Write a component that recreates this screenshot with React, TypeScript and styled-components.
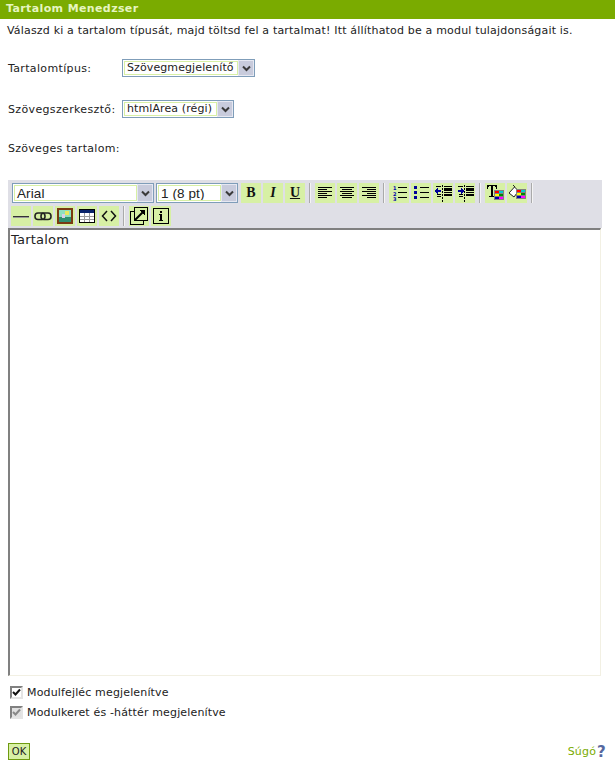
import React from "react";
import styled, { createGlobalStyle } from "styled-components";

const Global = createGlobalStyle`
  html, body { margin: 0; padding: 0; background: #fff; }
  body { font-family: "DejaVu Sans", Verdana, sans-serif; font-size: 11px; color: #222; }
`;

const Page = styled.div`
  width: 615px;
  height: 767px;
  display: flex;
  flex-direction: column;
  overflow: hidden;
`;
const Header = styled.div`
  height: 19px;
  background: #7aab00;
  color: #e6f5c0;
  font-weight: bold;
  font-size: 11px;
  line-height: 18px;
  padding-left: 6px;
  letter-spacing: 0.38px;
`;
const Intro = styled.div`
  margin: 5px 0 0 7px;
  height: 14px;
  line-height: 14px;
  letter-spacing: 0.18px;
`;
const FormRow = styled.div<{ $top: number }>`
  display: flex;
  align-items: center;
  height: 18px;
  margin: ${(p) => p.$top}px 0 0 8px;
`;
const Label = styled.div`
  width: 114px;
  letter-spacing: 0.35px;
`;
const SelectBox = styled.div<{ $w: number }>`
  box-sizing: border-box;
  width: ${(p) => p.$w}px;
  height: 18px;
  border: 1px solid #7f9db9;
  background: #fff;
  display: flex;
  padding: 1px;
`;
const SelectText = styled.div<{ $tool?: boolean }>`
  flex: 1;
  min-width: 0;
  border: 1px solid #d7f0a5;
  font-family: ${(p) => (p.$tool ? '"Liberation Sans", sans-serif' : 'inherit')};
  font-size: ${(p) => (p.$tool ? 13.5 : 11)}px;
  line-height: ${(p) => (p.$tool ? 15 : 11)}px;
  padding-left: 2px;
  letter-spacing: 0.1px;
  white-space: nowrap;
  overflow: hidden;
  color: #222;
`;
const SelectArrow = styled.div`
  width: 16px;
  background: #c8cbdc;
  border: 1px solid #e6e8f2;
  box-sizing: border-box;
  margin: -1px -1px -1px 0;
  display: flex;
  align-items: center;
  justify-content: center;
  flex: none;
`;
const Section = styled.div`
  margin: 24px 0 0 8px;
  height: 14px;
  line-height: 14px;
  letter-spacing: 0.28px;
`;
const ToolbarWrap = styled.div`
  margin: 24px 13px 0 8px;
  background: #dfdfe6;
  height: 48px;
  box-sizing: border-box;
  padding: 3px 0 0 3px;
  display: flex;
  flex-direction: column;
  gap: 3px;
`;
const ToolRow = styled.div`
  display: flex;
  align-items: center;
  height: 20px;
`;
const Tool = styled.div`
  width: 20px;
  height: 20px;
  background: #d7f0a5;
  margin-right: 2px;
  display: flex;
  align-items: center;
  justify-content: center;
  flex: none;
`;
const Sep = styled.div`
  width: 2px;
  height: 20px;
  background: #f4f4f4;
  border-left: 1px solid #aaa;
  box-sizing: border-box;
  margin: 0 4px 0 2px;
  flex: none;
`;
const ToolSelects = styled.div`
  display: flex;
  gap: 2px;
  margin: 0 3px 0 1px;
`;
const ToolSelect = styled(SelectBox)`
  height: 20px;
`;
const Editor = styled.div`
  margin: 0 14px 0 8px;
  height: 448px;
  box-sizing: border-box;
  border-top: 2px solid #808080;
  border-left: 2px solid #808080;
  border-right: 1px solid #f2f0e3;
  border-bottom: 1px solid #f2f0e3;
  font-size: 13px;
  line-height: 16px;
  padding: 2px 1px;
  letter-spacing: 0.2px;
  color: #222;
`;
const CheckRow = styled.div<{ $top: number }>`
  display: flex;
  align-items: center;
  height: 14px;
  margin: ${(p) => p.$top}px 0 0 10px;
  gap: 4px;
  letter-spacing: 0.15px;
`;
const Check = styled.div<{ $disabled?: boolean }>`
  box-sizing: border-box;
  width: 13px;
  height: 13px;
  background: ${(p) => (p.$disabled ? "#e0e0e0" : "#fff")};
  border: 2px solid;
  border-color: #808080 #e4e4e4 #e4e4e4 #808080;
  display: flex;
  align-items: center;
  justify-content: center;
`;
const Footer = styled.div`
  margin: 24px 9px 0 8px;
  display: flex;
  justify-content: space-between;
  align-items: center;
  height: 17px;
`;
const OkButton = styled.button`
  box-sizing: border-box;
  width: 22px;
  height: 17px;
  padding: 0;
  background: #d7f0a5;
  border: 1px solid #6f9a10;
  font: 10px "DejaVu Sans", sans-serif;
  color: #222;
`;
const Help = styled.div`
  display: flex;
  align-items: center;
  gap: 1px;
  color: #7aab00;
  letter-spacing: 0.2px;
`;
const HelpMark = styled.span`
  color: #56689f;
  font: bold 15px/14px "DejaVu Sans", sans-serif;
`;

const Arrow = () => (
  <svg width="9" height="7" viewBox="0 0 9 7">
    <path d="M1 1.5 4.5 5 8 1.5" fill="none" stroke="#3a3a3a" strokeWidth="2" />
  </svg>
);

const Ic = ({ children }: { children: React.ReactNode }) => (
  <svg width="20" height="20" viewBox="0 0 20 20" shapeRendering="crispEdges">
    {children}
  </svg>
);
const Lines = ({ rows }: { rows: [number, number, number][] }) => (
  <>
    {rows.map(([x, y, w], i) => (
      <rect key={i} x={x} y={y} width={w} height={1} fill="#000" />
    ))}
  </>
);
const Letter = styled.span<{ $i?: boolean; $u?: boolean }>`
  font-family: "Liberation Serif", serif;
  font-weight: bold;
  font-size: 14px;
  line-height: 16px;
  color: #111;
  font-style: ${(p) => (p.$i ? "italic" : "normal")};
  text-decoration: ${(p) => (p.$u ? "underline" : "none")};
`;

const Palette = ({ x, y }: { x: number; y: number }) => (
  <g>
    <rect x={x} y={y} width={10} height={10} fill="#808080" />
    <rect x={x + 1} y={y + 1} width={4} height={2} fill="#f00" />
    <rect x={x + 5} y={y + 1} width={4} height={2} fill="#0cc" />
    <rect x={x + 1} y={y + 4} width={4} height={2} fill="#ff0" />
    <rect x={x + 5} y={y + 4} width={4} height={2} fill="#080" />
    <rect x={x + 1} y={y + 7} width={4} height={2} fill="#00a" />
    <rect x={x + 5} y={y + 7} width={4} height={2} fill="#f0f" />
  </g>
);

const leftAlign: [number, number, number][] = [[3,4,14],[3,6,9],[3,8,14],[3,10,9],[3,12,14],[3,14,9]];
const centerAlign: [number, number, number][] = [[3,4,14],[5,6,10],[3,8,14],[5,10,10],[3,12,14],[5,14,10]];
const rightAlign: [number, number, number][] = [[3,4,14],[8,6,9],[3,8,14],[8,10,9],[3,12,14],[8,14,9]];
const listLines: [number, number, number][] = [[9,4,9],[9,9,9],[9,14,9]];

const Indent = ({ flip }: { flip?: boolean }) => (
  <Ic>
    {[2, 5, 8, 11, 14, 17].map((y) => (
      <rect key={y} x="9" y={y} width="1" height="2" fill="#000" />
    ))}
    <rect x="3" y="3" width="5" height="1" fill="#000" />
    <rect x="11" y="3" width="8" height="1" fill="#000" />
    <rect x="11" y="5" width="8" height="3" fill="#000" />
    <rect x="11" y="9" width="8" height="1" fill="#000" />
    <rect x="11" y="11" width="8" height="2" fill="#000" />
    <rect x="4" y="11" width="4" height="1" fill="#000" />
    <rect x="4" y="13" width="4" height="1" fill="#000" />
    <rect x="3" y="7" width="5" height="2" fill="#009" />
    {flip ? (
      <path d="M6 5h1v1h1v1h1v2h-1v1h-1v1h-1z" fill="#009" />
    ) : (
      <path d="M4 5h1v6h-1v-1h-1v-1h-1v-2h1v-1h1z" fill="#009" />
    )}
  </Ic>
);

const Digit = styled.text`
  font: bold 5px "DejaVu Sans", sans-serif;
  fill: #00a;
`;

const Toolbar = () => (
  <ToolbarWrap>
    <ToolRow>
      <ToolSelects>
        <ToolSelect $w={142}>
          <SelectText $tool>Arial</SelectText>
          <SelectArrow><Arrow /></SelectArrow>
        </ToolSelect>
        <ToolSelect $w={82}>
          <SelectText $tool>1 (8 pt)</SelectText>
          <SelectArrow><Arrow /></SelectArrow>
        </ToolSelect>
      </ToolSelects>
      <Tool><Letter>B</Letter></Tool>
      <Tool><Letter $i>I</Letter></Tool>
      <Tool><Letter $u>U</Letter></Tool>
      <Sep />
      <Tool><Ic><Lines rows={leftAlign} /></Ic></Tool>
      <Tool><Ic><Lines rows={centerAlign} /></Ic></Tool>
      <Tool><Ic><Lines rows={rightAlign} /></Ic></Tool>
      <Sep />
      <Tool>
        <svg width="20" height="20" viewBox="0 0 20 20">
          <Lines rows={listLines} />
          <Digit x="4" y="7">1</Digit>
          <Digit x="4" y="12.5">2</Digit>
          <Digit x="4" y="18">3</Digit>
        </svg>
      </Tool>
      <Tool>
        <Ic>
          <Lines rows={listLines} />
          <rect x="3" y="3" width="3" height="3" fill="#009" />
          <rect x="3" y="8" width="3" height="3" fill="#009" />
          <rect x="3" y="13" width="3" height="3" fill="#009" />
        </Ic>
      </Tool>
      <Tool><Indent /></Tool>
      <Tool><Indent flip /></Tool>
      <Sep />
      <Tool>
        <Ic>
          <path d="M2 2h10v4h-1v-2h-1v-1h-2v10h2v1h-6v-1h2v-10h-2v1h-1v2h-1z" fill="#000" />
          <Palette x={9} y={7} />
        </Ic>
      </Tool>
      <Tool>
        <svg width="20" height="20" viewBox="0 0 20 20">
          <path d="M2 10 7.5 4l4 4-4.5 6z" fill="#fff" stroke="#222" strokeWidth="1" />
          <path d="M8 4 6 2" stroke="#222" fill="none" />
          <Palette x={9} y={6} />
        </svg>
      </Tool>
      <Sep />
    </ToolRow>
    <ToolRow>
      <Tool>
        <svg width="18" height="18" shapeRendering="crispEdges"><rect x="1" y="9" width="16" height="1" fill="#333" /><rect x="1" y="10" width="16" height="1" fill="#999" /></svg>
      </Tool>
      <Tool>
        <svg width="18" height="18" viewBox="0 0 18 18">
          <rect x="1" y="6" width="10" height="6.5" rx="3" fill="none" stroke="#222" strokeWidth="1.6" />
          <rect x="7" y="6" width="10" height="6.5" rx="3" fill="none" stroke="#222" strokeWidth="1.6" />
        </svg>
      </Tool>
      <Tool>
        <svg width="16" height="16" shapeRendering="crispEdges">
          <rect width="16" height="16" fill="#7a3a12" />
          <rect x="2" y="2" width="12" height="12" fill="#8fe0c0" />
          <rect x="2" y="9" width="12" height="5" fill="#2f8f6f" />
          <rect x="8" y="3" width="4" height="4" fill="#e8e860" />
          <rect x="5" y="6" width="3" height="4" fill="#d8d0e8" />
        </svg>
      </Tool>
      <Tool>
        <svg width="16" height="14" shapeRendering="crispEdges">
          <rect x=".5" y=".5" width="15" height="13" fill="#fff" stroke="#000" />
          <rect x="1" y="1" width="14" height="3" fill="#0a246a" />
          <path d="M5.5 4v9M10.5 4v9M1 7.5h14M1 10.5h14" stroke="#999" fill="none" />
        </svg>
      </Tool>
      <Tool>
        <svg width="16" height="12" viewBox="0 0 16 12">
          <path d="M6 1 1.5 6 6 11M10 1l4.5 5L10 11" fill="none" stroke="#111" strokeWidth="1.5" />
        </svg>
      </Tool>
      <Sep />
      <Tool>
        <svg width="18" height="18" shapeRendering="crispEdges">
          <rect x=".5" y="4.5" width="13" height="13" fill="none" stroke="#000" />
          <rect x="4.5" y=".5" width="13" height="13" fill="#d7f0a5" stroke="#000" />
          <path d="M5 13 14 4" stroke="#000" strokeWidth="2" shapeRendering="auto" />
          <path d="M9 3h6v6z" fill="#000" />
        </svg>
      </Tool>
      <Tool>
        <svg width="16" height="16" shapeRendering="crispEdges">
          <rect x=".5" y=".5" width="15" height="15" fill="none" stroke="#000" strokeWidth="1" />
          <rect x="7" y="3" width="2" height="2" fill="#000" />
          <rect x="6" y="6" width="3" height="1" fill="#000" />
          <rect x="7" y="6" width="2" height="6" fill="#000" />
          <rect x="6" y="12" width="4" height="1" fill="#000" />
        </svg>
      </Tool>
    </ToolRow>
  </ToolbarWrap>
);

const Tick = ({ color }: { color: string }) => (
  <svg width="9" height="9" viewBox="0 0 9 9">
    <path d="M1 4l2.5 2.5L8 1.5" fill="none" stroke={color} strokeWidth="2" />
  </svg>
);

export default function App() {
  return (
    <Page>
      <Global />
      <Header>Tartalom Menedzser</Header>
      <Intro>Válaszd ki a tartalom típusát, majd töltsd fel a tartalmat! Itt állíthatod be a modul tulajdonságait is.</Intro>
      <FormRow $top={21}>
        <Label>Tartalomtípus:</Label>
        <SelectBox $w={133}>
          <SelectText>Szövegmegjelenítő</SelectText>
          <SelectArrow><Arrow /></SelectArrow>
        </SelectBox>
      </FormRow>
      <FormRow $top={23}>
        <Label>Szövegszerkesztő:</Label>
        <SelectBox $w={112}>
          <SelectText>htmlArea (régi)</SelectText>
          <SelectArrow><Arrow /></SelectArrow>
        </SelectBox>
      </FormRow>
      <Section>Szöveges tartalom:</Section>
      <Toolbar />
      <Editor>Tartalom</Editor>
      <CheckRow $top={9}>
        <Check><Tick color="#111" /></Check>
        Modulfejléc megjelenítve
      </CheckRow>
      <CheckRow $top={6}>
        <Check $disabled><Tick color="#888" /></Check>
        Modulkeret és -háttér megjelenítve
      </CheckRow>
      <Footer>
        <OkButton>OK</OkButton>
        <Help>Súgó<HelpMark>?</HelpMark></Help>
      </Footer>
    </Page>
  );
}
